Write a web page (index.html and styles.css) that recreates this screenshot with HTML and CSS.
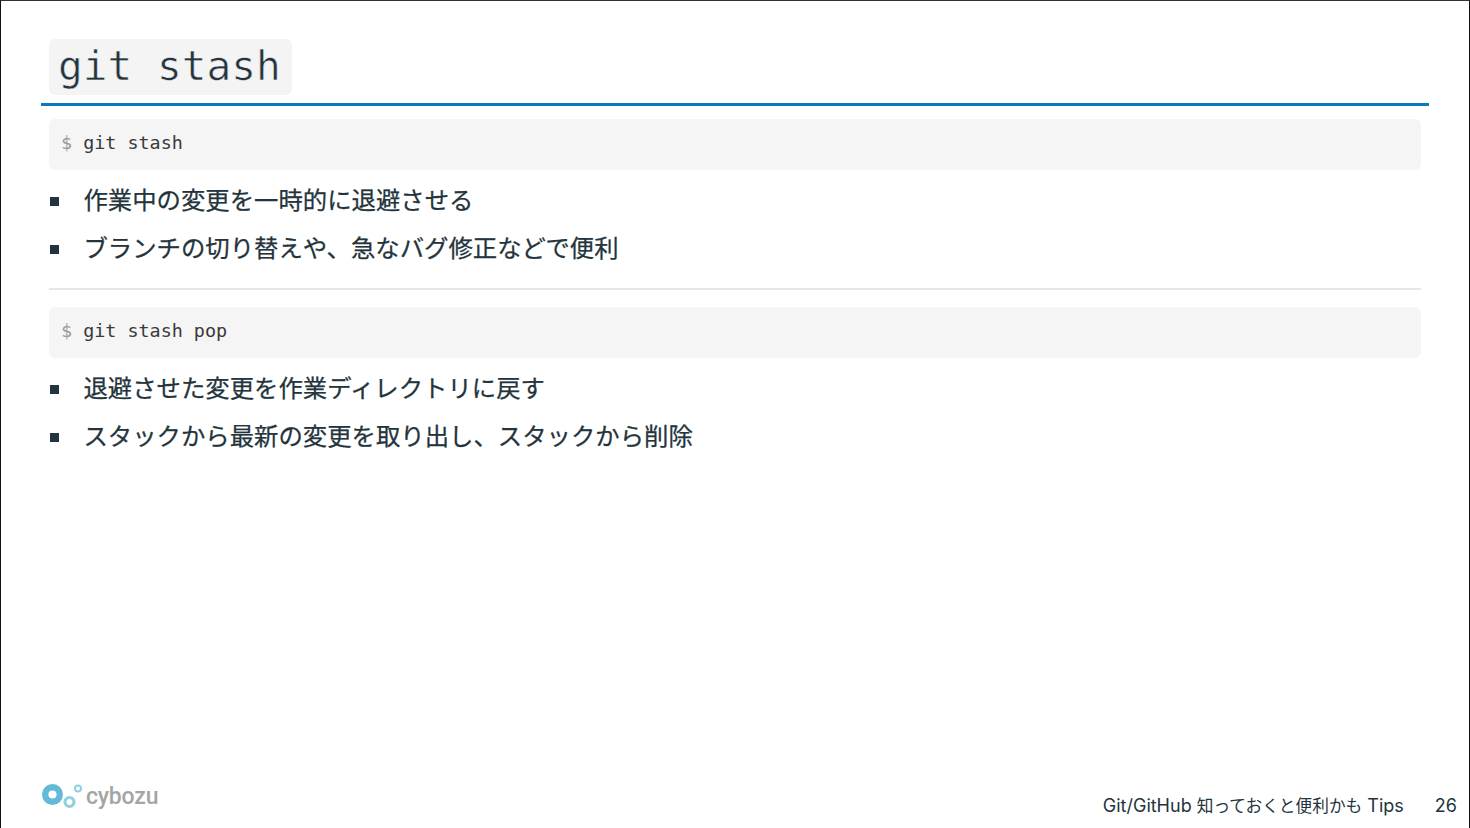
FILE: index.html
```html
<!DOCTYPE html>
<html lang="ja">
<head>
<meta charset="utf-8">
<title>git stash</title>
<link rel="stylesheet" href="styles.css">
</head>
<body>
<main class="slide">
  <section class="content">
    <h1 class="heading"><code class="heading-code">git stash</code></h1>
    <div class="body">
      <pre class="cmd"><span class="prompt">$</span> git stash</pre>
      <ul class="points">
        <li>作業中の変更を一時的に退避させる</li>
        <li>ブランチの切り替えや、急なバグ修正などで便利</li>
      </ul>
      <hr class="rule">
      <pre class="cmd"><span class="prompt">$</span> git stash pop</pre>
      <ul class="points">
        <li>退避させた変更を作業ディレクトリに戻す</li>
        <li>スタックから最新の変更を取り出し、スタックから削除</li>
      </ul>
    </div>
  </section>
  <footer class="foot">
    <div class="logo">
      <svg class="logo-mark" width="45" height="32" viewBox="0 0 45 32" aria-hidden="true">
        <circle cx="11.500" cy="11.500" r="7.300" fill="none" stroke="#62bad6" stroke-width="6.400"/>
        <circle cx="28.500" cy="19" r="4.500" fill="none" stroke="#8fd0e3" stroke-width="3.200"/>
        <circle cx="37" cy="5.500" r="3" fill="none" stroke="#8fd0e3" stroke-width="2"/>
      </svg>
      <span class="logo-text">cybozu</span>
    </div>
    <div class="foot-title">Git/GitHub <span class="foot-ja">知っておくと便利かも</span> Tips</div>
    <div class="foot-page">26</div>
  </footer>
</main>
</body>
</html>
```
FILE: styles.css
```css
* { box-sizing: border-box; }
html, body { margin: 0; padding: 0; background: #fff; }
.slide {
  width: 1470px;
  height: 828px;
  display: flex;
  flex-direction: column;
  border-top: 1px solid #333;
  border-left: 1px solid #111;
  border-right: 1px solid #111;
  color: #24343c;
  font-family: "Noto Sans CJK JP", "Noto Sans", sans-serif;
  overflow: hidden;
}
.content { padding: 38px 40px 0 40px; flex: 1; }
.heading {
  margin: 0;
  padding: 0 8px 8px;
  border-bottom: 3px solid #0a7abd;
  line-height: 0;
}
.heading-code {
  display: inline-block;
  height: 56px;
  padding: 0 11px 0 9px;
  background: #f4f4f4;
  border-radius: 6px;
  font-family: "DejaVu Sans Mono", monospace;
  font-weight: 400;
  font-size: 41.100px;
  line-height: 54px;
  color: #24343c;
  -webkit-text-stroke: 0.6px #f4f4f4;
}
.body { padding: 13px 8px 0; }
.cmd {
  margin: 0;
  height: 51px;
  padding: 0 12px;
  background: #f5f5f5;
  border-radius: 6px;
  font-family: "DejaVu Sans Mono", monospace;
  font-size: 18.400px;
  line-height: 47px;
  color: #3a3a3a;
}
.prompt { color: #9a9a9a; }
.points {
  list-style: none;
  margin: 5px 0 0;
  padding: 0;
}
.points li {
  position: relative;
  padding-left: 34.500px;
  height: 48px;
  font-size: 24.380px;
  line-height: 48px;
  -webkit-text-stroke: 0.25px #24343c;
}
.points li::before {
  content: "";
  position: absolute;
  left: 1px;
  top: 22px;
  width: 9px;
  height: 9px;
  background: #24343c;
}
.rule {
  margin: 17px 0;
  border: 0;
  height: 2px;
  background: #e6e6e6;
}
.foot {
  display: flex;
  align-items: flex-end;
  padding: 0 12px 10px 40px;
  height: 60px;
  flex: none;
}
.logo {
  display: flex;
  align-items: flex-start;
  margin-right: auto;
  margin-bottom: 3px;
  height: 32px;
}
.logo-text {
  font-family: "Roboto", sans-serif;
  font-weight: 500;
  font-size: 23px;
  line-height: 27px;
  letter-spacing: -0.2px;
  color: #a5a5a5;
}
.foot-title, .foot-page {
  font-family: "Inter", "Noto Sans CJK JP", sans-serif;
  font-size: 18px;
  line-height: 24px;
  color: #24343c;
}
.foot-ja { font-size: 16.700px; }
.foot-page { margin-left: 31px; }
```
